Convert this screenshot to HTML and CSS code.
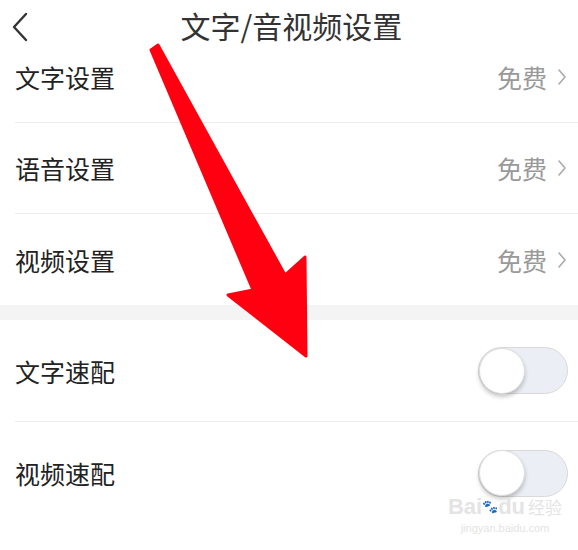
FILE: index.html
```html
<!DOCTYPE html>
<html lang="zh-CN">
<head>
    <meta charset="UTF-8">
    <meta name="viewport" content="width=device-width, initial-scale=1.0">
    <title>文字/音视频设置</title>
    <link rel="stylesheet" href="styles.css">
</head>
<body>
    <div class="page">
        <div class="top-bar">
            <span class="back">
                <svg width="18" height="30" viewBox="0 0 18 30"><path d="M15 2 L3 15 L15 28" fill="none" stroke="#333" stroke-width="2.4" stroke-linecap="round" stroke-linejoin="round"/></svg>
            </span>
            <span class="title">文字/音视频设置</span>
        </div>

        <div class="group">
            <div class="row">
                <span class="label">文字设置</span>
                <span class="value">免费<svg class="chevron" width="10" height="18" viewBox="0 0 10 18"><path d="M2 2 L8 9 L2 16" fill="none" stroke="#aaa" stroke-width="1.6" stroke-linecap="round" stroke-linejoin="round"/></svg></span>
            </div>
            <div class="row">
                <span class="label">语音设置</span>
                <span class="value">免费<svg class="chevron" width="10" height="18" viewBox="0 0 10 18"><path d="M2 2 L8 9 L2 16" fill="none" stroke="#aaa" stroke-width="1.6" stroke-linecap="round" stroke-linejoin="round"/></svg></span>
            </div>
            <div class="row">
                <span class="label">视频设置</span>
                <span class="value">免费<svg class="chevron" width="10" height="18" viewBox="0 0 10 18"><path d="M2 2 L8 9 L2 16" fill="none" stroke="#aaa" stroke-width="1.6" stroke-linecap="round" stroke-linejoin="round"/></svg></span>
            </div>
        </div>

        <div class="gap-band"></div>

        <div class="group">
            <div class="row tall">
                <span class="label">文字速配</span>
                <span class="switch"><span class="knob"></span></span>
            </div>
            <div class="row tall">
                <span class="label">视频速配</span>
                <span class="switch"><span class="knob"></span></span>
            </div>
        </div>

        <!-- annotation arrow drawn over the screenshot -->
        <svg class="arrow" width="578" height="550" viewBox="0 0 578 550">
            <polygon points="151,50 253,290 228,295 306,356 305,257 285,275 158,45" fill="#ff0010" stroke="#ff0010" stroke-width="3" stroke-linejoin="round"/>
        </svg>

        <div class="watermark">
            <div class="wm-logo">Bai<span class="paw">&#x1F43E;</span>du<span class="wm-cn">经验</span></div>
            <div class="wm-url">jingyan.baidu.com</div>
        </div>
    </div>
</body>
</html>
```

FILE: styles.css
```css
:root {
    --text-color: #222222;
    --muted-color: #999999;
    --line-color: #eeeeee;
    --band-color: #f4f4f4;
}

* {
    box-sizing: border-box;
}

body {
    margin: 0;
    padding: 0;
    background-color: #ffffff;
    font-family: "Noto Sans CJK SC", "Noto Sans", sans-serif;
    color: var(--text-color);
}

.page {
    position: relative;
    width: 578px;
    height: 550px;
    overflow: hidden;
}

.top-bar {
    height: 32px;
    display: flex;
    align-items: flex-start;
}

.back {
    height: 54px;
    display: flex;
    align-items: center;
    padding-left: 11px;
}

.title {
    flex: 1;
    text-align: center;
    font-size: 30px;
    line-height: 50px;
    color: #333333;
    margin-left: -6px;
    margin-right: 18px;
}

.group {
    padding-left: 15px;
}

.row {
    height: 91px;
    display: flex;
    align-items: center;
    justify-content: space-between;
    padding-right: 11px;
    border-bottom: 1px solid var(--line-color);
}

.group .row:last-child {
    border-bottom: none;
}

.row.tall {
    height: 102px;
    border-bottom: 1px solid var(--line-color);
    padding-right: 10px;
}

.label {
    font-size: 25px;
    color: var(--text-color);
}

.value {
    display: flex;
    align-items: center;
    font-size: 25px;
    color: var(--muted-color);
}

.chevron {
    margin-left: 10px;
}

.gap-band {
    height: 15px;
    background-color: var(--band-color);
}

.switch {
    width: 90px;
    height: 47px;
    border: 1px solid #d9d9d9;
    border-radius: 24px;
    background-color: #eceef5;
    display: flex;
    align-items: center;
}

.knob {
    width: 46px;
    height: 46px;
    border-radius: 50%;
    background-color: #ffffff;
    border: 1px solid #dddddd;
    box-shadow: 0 3px 4px rgba(0, 0, 0, 0.22);
}

.arrow {
    position: absolute;
    left: 0;
    top: 0;
    pointer-events: none;
}

.watermark {
    position: absolute;
    left: 440px;
    top: 494px;
    width: 130px;
    color: #e4e4e4;
    text-align: center;
    white-space: nowrap;
    font-family: "Liberation Sans", sans-serif;
}

.wm-logo {
    font-size: 22px;
    line-height: 26px;
    font-weight: bold;
}

.paw {
    font-size: 13px;
    vertical-align: top;
}

.wm-cn {
    font-family: "Noto Sans CJK SC", sans-serif;
    font-size: 17px;
    font-weight: normal;
    margin-left: 3px;
}

.wm-url {
    font-size: 11px;
    line-height: 16px;
}
```
